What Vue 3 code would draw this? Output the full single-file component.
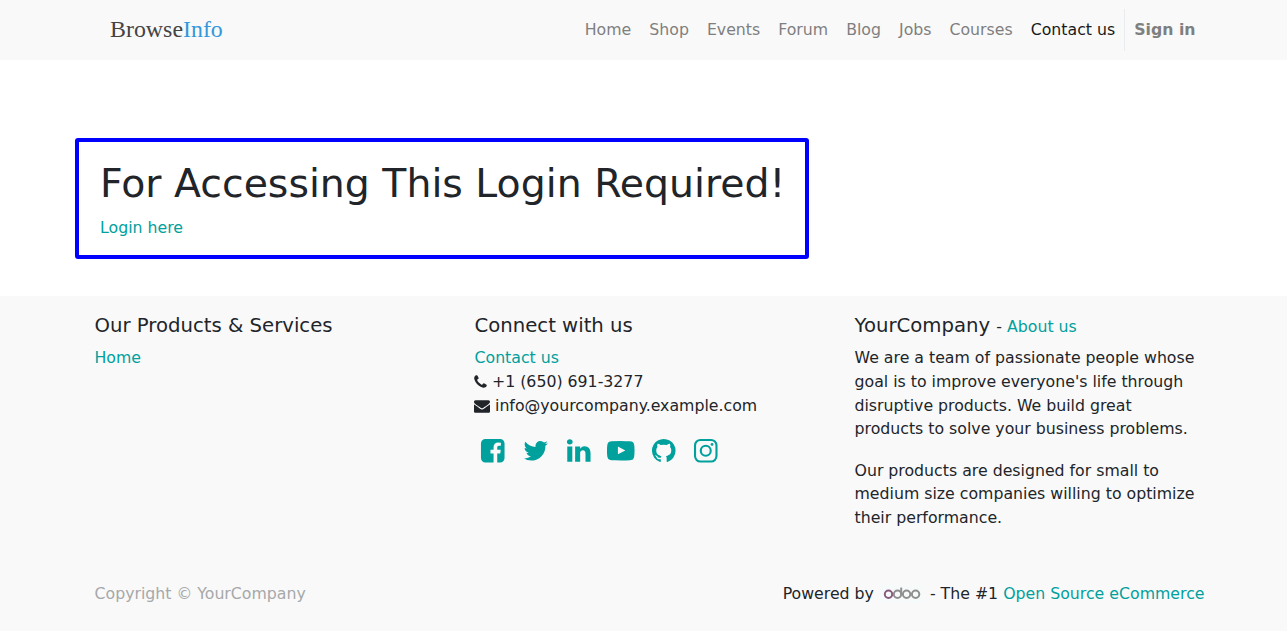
<script setup>
const navItems = ['Home', 'Shop', 'Events', 'Forum', 'Blog', 'Jobs', 'Courses', 'Contact us']

const social = [
  { name: 'facebook', d: 'M1376 128q119 0 203.5 84.5t84.5 203.5v960q0 119-84.5 203.5t-203.5 84.5h-188v-595h199l30-232h-229v-148q0-56 23.5-84t91.5-28l122-1v-207q-63-9-178-9-136 0-217.5 80t-81.5 226v171h-200v232h200v595h-532q-119 0-203.5-84.5t-84.5-203.5v-960q0-119 84.5-203.5t203.5-84.5h960z' },
  { name: 'twitter', d: 'M1684 408q-67 98-162 167 1 14 1 42 0 130-38 259.5t-115.5 248.5-184.5 210.5-258 146-323 54.5q-271 0-496-145 35 4 78 4 225 0 401-138-105-2-188-64.5t-114-159.5q33 5 61 5 43 0 85-11-112-23-185.5-111.5t-73.5-205.5v-4q68 38 146 41-66-44-105-115t-39-154q0-88 44-163 121 149 294.5 238.5t371.5 99.5q-8-38-8-74 0-134 94.5-228.5t228.5-94.5q140 0 236 102 109-21 205-78-37 115-142 178 93-10 186-50z' },
  { name: 'linkedin', d: 'M477 625v991h-330v-991h330zm21-306q1 73-50.5 122t-135.5 49h-2q-82 0-132-49t-50-122q0-74 51.5-122.5t134.5-48.5 133 48.5 51 122.5zm1166 729v568h-329v-530q0-105-40.5-164.5t-126.5-59.5q-63 0-105.5 34.5t-63.5 85.5q-11 30-11 81v553h-329q2-399 2-647t-1-296l-1-48h329v144h-2q20-32 41-56t56.5-52 87-43.5 114.5-15.5q171 0 275 113.5t104 332.5z' },
  { name: 'youtube', d: 'M711 1128l484-250-484-253v503zm185-862q168 0 324.5 4.5t229.5 9.5l73 4q1 0 17 1.5t23 3 23.5 4.5 28.5 8 28 13 31 19.5 29 26.5q6 6 15.5 18.5t29 58.5 26.5 101q8 64 12.5 136.5t5.5 113.5v176q1 145-18 290-7 55-25 99.5t-32 61.5l-14 17q-14 15-29 26.5t-31 19-28 12.5-28.5 8-24 4.5-23 3-16.5 1.5q-251 19-627 19-207-2-359.5-6.5t-200.5-7.5l-49-4-36-4q-36-5-54.5-10t-51-21-56.5-41q-6-6-15.5-18.5t-29-58.5-26.5-101q-8-64-12.5-136.5t-5.5-113.5v-176q-1-145 18-290 7-55 25-99.5t32-61.5l14-17q14-15 29-26.5t31-19.5 28-13 28.5-8 23.5-4.5 23-3 17-1.5q251-18 627-18z' },
  { name: 'github', d: 'M896 128q209 0 385.5 103t279.5 279.5 103 385.5q0 251-146.5 451.5t-378.5 277.5q-27 5-40-7t-13-30q0-3 .5-76.5t.5-134.5q0-97-52-142 57-6 102.5-18t94-39 81-66.5 53-105 20.5-150.5q0-119-79-206 37-91-8-204-28-9-81 11t-92 44l-38 24q-93-26-192-26t-192 26q-16-11-42.5-27t-83.5-38.5-85-13.5q-45 113-8 204-79 87-79 206 0 85 20.5 150t52.5 105 80.5 67 94 39 102.5 18q-39 36-49 103-21 10-45 15t-57 5-65.5-21.5-55.5-62.5q-19-32-48.5-52t-49.5-24l-20-3q-21 0-29 4.5t-5 11.5 9 14 13 12l7 5q22 10 43.5 38t31.5 51l10 23q13 38 44 61.5t67 30 69.5 7 55.5-3.5l23-4q0 38 .5 88.5t.5 54.5q0 18-13 30t-40 7q-232-77-378.5-277.5t-146.5-451.5q0-209 103-385.5t279.5-279.5 385.5-103z' },
]
</script>

<template>
  <div class="page">
    <header>
      <div class="bar">
        <a class="brand">Browse<span>Info</span></a>
        <nav>
          <a v-for="item in navItems" :key="item" :class="{ active: item === 'Contact us' }">{{ item }}</a>
          <a class="signin">Sign in</a>
        </nav>
      </div>
    </header>

    <main>
      <section class="notice">
        <h1>For Accessing This Login Required!</h1>
        <a class="link">Login here</a>
      </section>
    </main>

    <footer>
      <div class="columns">
        <div class="col">
          <h5>Our Products &amp; Services</h5>
          <a class="link">Home</a>
        </div>
        <div class="col">
          <h5>Connect with us</h5>
          <ul>
            <li><a class="link">Contact us</a></li>
            <li>
              <svg class="phone" viewBox="192 0 1408 1792"><path d="M1600 1240q0 27-10 70.5t-21 68.5q-21 50-122 106-94 51-186 51-27 0-53-3.5t-57.5-12.5-47-14.5-55.5-20.5-49-18q-98-35-175-83-127-79-264-216t-216-264q-48-77-83-175-3-9-18-49t-20.5-55.5-14.5-47-12.5-57.5-3.5-53q0-92 51-186 56-101 106-122 25-11 68.5-21t70.5-10q14 0 21 3 18 6 53 76 11 19 30 54t35 63.5 31 53.5q3 4 17.5 25t21.5 35.5 7 28.5q0 20-28.5 50t-62 55-62 53-28.5 46q0 9 5 22.5t8.5 20.5 14 24 11.5 19q76 137 174 235t235 174q2 1 19 11.5t24 14 20.5 8.5 22.5 5q18 0 46-28.5t53-62 55-62 50-28.5q14 0 28.5 7t35.5 21.5 25 17.5q25 15 53.5 31t63.5 35 54 30q70 35 76 53 3 7 3 21z" /></svg>
              <span>+1 (650) 691-3277</span>
            </li>
            <li>
              <svg class="mail" viewBox="0 0 1792 1792"><path d="M1792 710v794q0 66-47 113t-113 47h-1472q-66 0-113-47t-47-113v-794q44 49 101 87 362 246 497 345 57 42 92.5 65.5t94.5 48 110 24.5h2q51 0 110-24.5t94.5-48 92.5-65.5q170-123 498-345 57-39 100-87zm0-294q0 79-49 151t-122 123q-376 261-468 325-10 7-42.5 31t-54 39-52 32.5-57.5 27-50 9.5h-2q-23 0-50-9.5t-57.5-27-52-32.5-54-39-42.5-31q-91-64-262-182.5t-205-142.5q-62-42-117-115.5t-55-136.5q0-78 41.5-130t118.5-52h1472q65 0 112.5 47t47.5 113z" /></svg>
              <span>info@yourcompany.example.com</span>
            </li>
          </ul>
          <div class="social">
            <svg v-for="icon in social" :key="icon.name" :class="icon.name" viewBox="0 0 1792 1792"><path :d="icon.d" /></svg>
            <svg viewBox="0 0 1792 1792">
              <rect class="ring" x="197" y="197" width="1398" height="1398" rx="350" />
              <circle class="ring" cx="896" cy="896" r="325" />
              <circle cx="1306" cy="486" r="92" />
            </svg>
          </div>
        </div>
        <div class="col">
          <h5>YourCompany <small>- <a class="link">About us</a></small></h5>
          <p>We are a team of passionate people whose goal is to improve everyone's life through disruptive products. We build great products to solve your business problems.</p>
          <p>Our products are designed for small to medium size companies willing to optimize their performance.</p>
        </div>
      </div>
      <div class="legal">
        <span class="copy">Copyright © YourCompany</span>
        <div class="powered">
          <span>Powered by</span>
          <svg class="odoo" viewBox="0 0 44 18">
            <rect width="44" height="18" fill="#f7fafa" />
            <g fill="none" stroke="#8f8f8f" stroke-width="2">
              <circle cx="8.5" cy="9.3" r="3.7" stroke="#875a7b" />
              <circle cx="17.5" cy="9.3" r="3.7" />
              <path d="M21.2 2.6v7" />
              <circle cx="26.6" cy="9.3" r="3.7" />
              <circle cx="35.6" cy="9.3" r="3.7" />
            </g>
          </svg>
          <span>- The #1 <a class="link">Open Source eCommerce</a></span>
        </div>
      </div>
    </footer>
  </div>
</template>

<style>
body { margin: 0; background: #fff; }
</style>

<style scoped>
* { box-sizing: border-box; }
.page {
  display: flex;
  flex-direction: column;
  height: 631px;
  overflow: hidden;
  font: 15.75px/23.625px "DejaVu Sans", sans-serif;
  color: #212529;
}
header { flex: none; height: 60px; background: #f9f9f9; }
.bar {
  display: flex;
  justify-content: space-between;
  align-items: center;
  height: 60px;
  padding: 0 82.5px 0 110px;
}
.brand { margin-top: -2px; font: 23.9px/30px "Liberation Serif", serif; color: #444; }
.brand span { color: #3498db; }
nav { display: flex; align-items: center; }
nav a { padding: 0 9px; line-height: 42px; color: #7f7f7f; white-space: nowrap; }
nav a.active { color: #191919; }
nav .signin { border-left: 1px solid #e9ecef; font-weight: bold; }
main { flex: none; height: 236px; padding: 78px 0 0 75px; }
.notice {
  width: 734px;
  height: 121px;
  padding: 18px 21px;
  border: 4px solid #00f;
  border-radius: 3px;
}
h1 { margin: 0 0 9px; font-size: 39.4px; font-weight: 400; line-height: 47.25px; white-space: nowrap; }
.link { color: #00a09d; }
footer { flex: 1; padding: 18px 82.5px 0 94.5px; background: #f9f9f9; }
.columns { display: flex; height: 268px; }
.col { width: 380px; flex: none; }
.col:last-child { width: 350px; }
h5 { margin: 0 0 7.875px; font-size: 19.6875px; font-weight: 400; line-height: 23.625px; }
.col:last-child h5 { margin-bottom: 7.68px; }
h5 small { font-size: 15.75px; }
ul { margin: 0; padding: 0; list-style: none; }
li { display: flex; align-items: center; height: 24px; gap: 5px; }
li svg { height: 16px; margin: 0 0 0 -0.5px; fill: #212529; }
.phone { width: 13px; }
.mail { width: 16px; }
.social { display: flex; gap: 15.1px; margin: 19.2px 0 0 4.9px; }
.social svg { width: 27.5px; height: 27.5px; fill: #00a09d; }
.social .github { margin: 0 -0.7px 0 0.7px; }
.social .ring { fill: none; stroke: #00a09d; stroke-width: 138; }
p { margin: 0 0 17.9px; }
.legal { display: flex; justify-content: space-between; }
.copy { color: #a6a8a9; }
.powered { display: flex; white-space: pre; }
.odoo { width: 44px; height: 18px; margin: 3px 6px 0 6px; }
</style>
